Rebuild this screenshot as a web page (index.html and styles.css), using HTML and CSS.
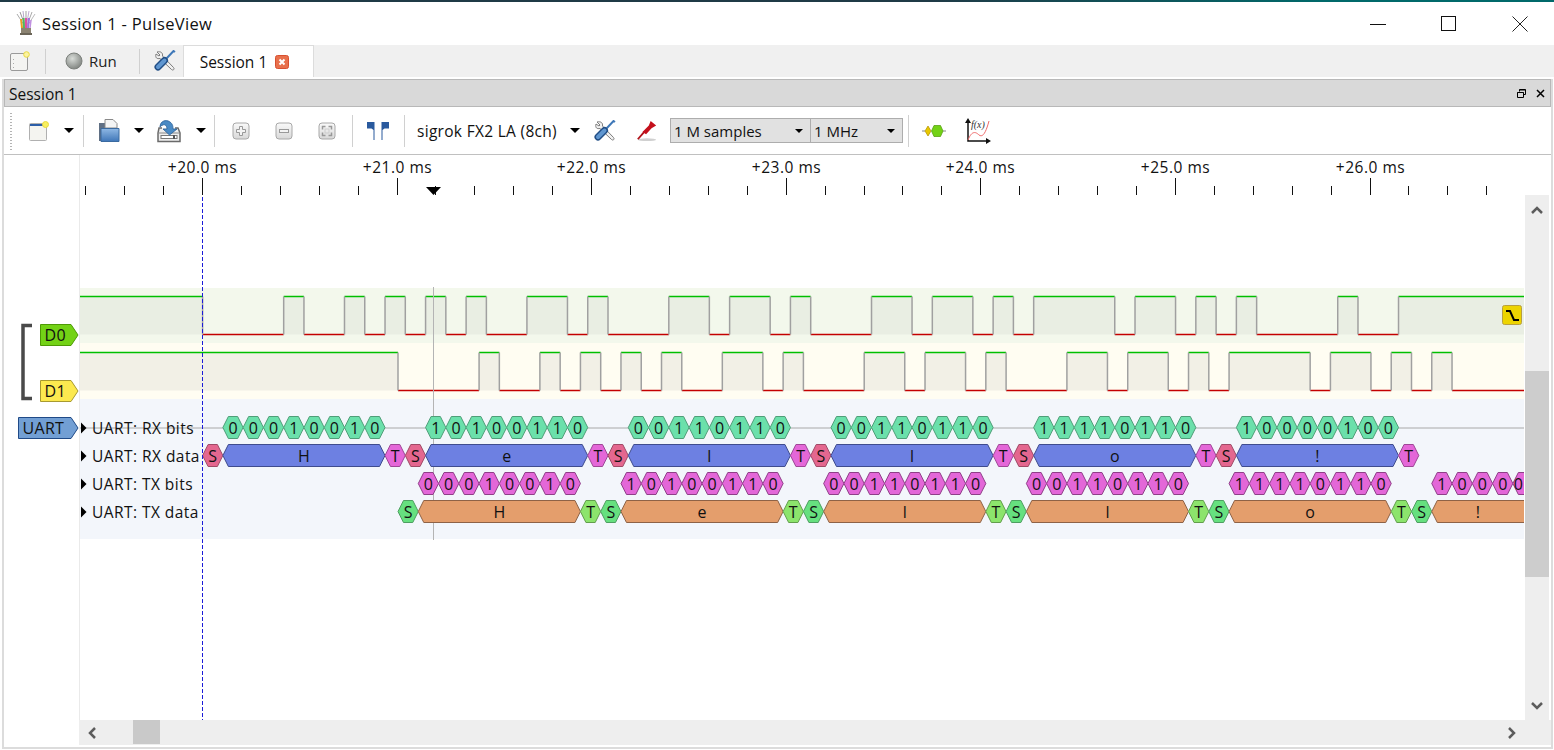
FILE: index.html
```html
<!DOCTYPE html>
<html lang="en">
<head>
<meta charset="utf-8">
<title>Session 1 - PulseView</title>
<link rel="stylesheet" href="styles.css">
</head>
<body>
<svg class="defs" width="0" height="0" aria-hidden="true">
  <defs>
    <linearGradient id="zoomfill" x1="0" y1="0" x2="0" y2="1"><stop offset="0" stop-color="#fafafa"/><stop offset="1" stop-color="#d8d8d8"/></linearGradient>
    <linearGradient id="folderfill" x1="0" y1="0" x2="0" y2="1"><stop offset="0" stop-color="#8fb8e4"/><stop offset="1" stop-color="#3f76b8"/></linearGradient>
    <radialGradient id="runfill" cx=".4" cy=".35" r=".7"><stop offset="0" stop-color="#d8dcd8"/><stop offset="1" stop-color="#7d817d"/></radialGradient>
    <symbol id="tools" viewBox="0 0 22 22">
      <path d="M3 2 L6 5 L5 6 L2 4 C1 8 3 9 6 8.500 L17.500 19.500 C19 21 21 19 19.500 17.500 L8.500 6 C9 3 7 1 3 2Z" fill="#f0f0f0" stroke="#7c7c7c" stroke-width="1"/>
      <path d="M21 2 L19.500 1 L12 9" fill="none" stroke="#3f78b8" stroke-width="2"/>
      <path d="M10.500 10.500 L4 17" stroke="#234f86" stroke-width="7" stroke-linecap="round"/>
      <path d="M10.500 10.500 L4 17" stroke="#5f96d0" stroke-width="4" stroke-linecap="round"/>
    </symbol>
    <symbol id="zoombox" viewBox="0 0 18 18">
      <rect x="1" y="1" width="16" height="16" rx="3" fill="url(#zoomfill)" stroke="#a8a8a8"/>
    </symbol>
  </defs>
</svg>

<div class="window">
  <header class="titlebar">
    <svg class="logo" width="24" height="26" viewBox="0 0 24 26">
      <path d="M12 17 L3 3" stroke="#aaa"/><path d="M12 17 L6 1" stroke="#999"/>
      <path d="M11 17 L9 0" stroke="#b8a8c8"/><path d="M12 17 L12 0" stroke="#a0a0a0"/>
      <path d="M12 17 L15 0" stroke="#c0a8d0"/><path d="M12 17 L18 1" stroke="#aaa"/><path d="M12 17 L21 3" stroke="#bbb"/>
      <path d="M8 17 L7 8" stroke="#e8a020" stroke-width="2"/><path d="M10 17 L9.500 7" stroke="#50b860" stroke-width="2"/>
      <path d="M12 17 L12 7" stroke="#e050a0" stroke-width="2"/><path d="M14 17 L15 7" stroke="#a070e0" stroke-width="2"/><path d="M16 17 L17 9" stroke="#c090e0" stroke-width="1.500"/>
      <rect x="7" y="17" width="10" height="7" fill="#8b8372"/><rect x="6" y="22" width="12" height="2" fill="#6b6558"/>
    </svg>
    <span class="title-text">Session 1 - PulseView</span>
    <div class="winctl">
      <svg class="wc" width="16" height="16" viewBox="0 0 16 16"><path d="M0 8.500H16" stroke="#111"/></svg>
      <svg class="wc" width="16" height="16" viewBox="0 0 16 16"><rect x=".5" y=".5" width="14" height="14" fill="none" stroke="#111"/></svg>
      <svg class="wc" width="16" height="16" viewBox="0 0 16 16"><path d="M.5 .5L15.500 15.500M15.500 .5L.5 15.500" stroke="#222"/></svg>
    </div>
  </header>

  <nav class="tabbar">
    <svg class="tab-new" width="20" height="20" viewBox="0 0 20 20">
      <rect x=".5" y="2.500" width="17" height="17" rx="1.500" fill="#f4f4f2" stroke="#9a9a9a"/>
      <path d="M3.500 8v1M3.500 12v1M3.500 16v1" stroke="#aaa"/>
      <circle cx="16.500" cy="3.500" r="2.800" fill="#fbf3a0" stroke="#e8d840"/>
    </svg>
    <span class="vsep tab-sep"></span>
    <svg class="run-led" width="18" height="18" viewBox="0 0 18 18"><circle cx="9" cy="9" r="8" fill="url(#runfill)" stroke="#7d817d"/></svg>
    <span class="run-text">Run</span>
    <span class="vsep tab-sep2"></span>
    <svg class="tab-tools" width="22" height="22"><use href="#tools"/></svg>
    <div class="tab">
      <span>Session 1</span>
      <svg class="tab-close" width="14" height="14" viewBox="0 0 14 14">
        <rect x=".5" y=".5" width="13" height="13" rx="2" fill="#e8704c" stroke="#d85030"/>
        <path d="M4.500 4.500L9.500 9.500M9.500 4.500L4.500 9.500" stroke="#fff" stroke-width="2"/>
      </svg>
    </div>
  </nav>

  <main class="dock">
    <div class="dock-title">
      <span>Session 1</span>
      <div class="dock-ctl">
        <svg width="9" height="9" viewBox="0 0 9 9"><path d="M2.500 2.500V.5H8.500V5.500H6.500M.5 3.500H6.500V8.500H.5Z" fill="none" stroke="#000"/><path d="M.5 3.500H6.500M2.500 1H8.500" stroke="#000"/></svg>
        <svg width="9" height="9" viewBox="0 0 9 9"><path d="M1 1L8 8M8 1L1 8" stroke="#000" stroke-width="1.500"/></svg>
      </div>
    </div>

    <div class="toolbar">
      <span class="handle"></span>
      <span class="tb tb-first">
        <svg width="20" height="20" viewBox="0 0 20 20"><rect x=".5" y="2.500" width="17" height="17" rx="1" fill="#f4f4f0" stroke="#b0b0b0"/><path d="M1 4H16" stroke="#2c5ea8" stroke-width="2"/><circle cx="16.500" cy="3.500" r="3" fill="#f8f060" stroke="#e8d840"/></svg>
      </span>
      <span class="drop"></span>
      <span class="vsep sep-a"></span>
      <span class="tb">
        <svg width="22" height="24" viewBox="0 0 22 24"><rect x="1" y="4" width="7" height="18" fill="#5f6f84"/><path d="M7 .5H15L19 4.500V9H7Z" fill="#f4f4f4" stroke="#8a8a8a"/><path d="M3 9.500H21V22.500H3Z" fill="url(#folderfill)" stroke="#3a6aa0"/></svg>
      </span>
      <span class="drop"></span>
      <span class="tb tb-save">
        <svg width="24" height="24" viewBox="0 0 24 24"><path d="M5 9H2L1 14V22.500H23V14L21 9H18" fill="#eee" stroke="#6a6a6a" stroke-width="1.500"/><path d="M1 14H23" stroke="#888"/><rect x="4" y="16.500" width="16" height="3" fill="#fff" stroke="#777"/><rect x="16" y="16" width="2" height="4" fill="#555"/><path d="M3 8C3 2 9 0 13 3C16 5 16 8 16 10H20L12.500 16L6 10H10C10 7 8 5 6 6C4.500 6.500 3.500 7 3 8Z" fill="#4a8ac4" stroke="#2a6098" stroke-width=".8"/></svg>
      </span>
      <span class="drop drop-save"></span>
      <span class="vsep sep-b"></span>
      <span class="tb tb-zoom tb-zoom1">
        <svg width="18" height="18" viewBox="0 0 18 18"><use href="#zoombox" width="18" height="18"/><path d="M7.500 4.500H10.500V7.500H13.500V10.500H10.500V13.500H7.500V10.500H4.500V7.500H7.500Z" fill="#f4f4f4" stroke="#999"/></svg>
      </span>
      <span class="tb tb-zoom">
        <svg width="18" height="18" viewBox="0 0 18 18"><use href="#zoombox" width="18" height="18"/><rect x="4.500" y="7.500" width="9" height="3" fill="#f4f4f4" stroke="#999"/></svg>
      </span>
      <span class="tb tb-zoom">
        <svg width="18" height="18" viewBox="0 0 18 18"><use href="#zoombox" width="18" height="18"/><path d="M4.500 7.500V4.500H7.500M10.500 4.500H13.500V7.500M13.500 10.500V13.500H10.500M7.500 13.500H4.500V10.500" fill="none" stroke="#999" stroke-width="1.500"/><rect x="7" y="7" width="4" height="4" fill="none" stroke="#ccc"/></svg>
      </span>
      <span class="vsep sep-c"></span>
      <span class="tb tb-cursors">
        <svg width="24" height="20" viewBox="0 0 24 20"><path d="M1 1H8.500V19H7.500V9L5.500 7.500H1Z" fill="#2a5a9e"/><path d="M23 1H15.500V19H16.500V9L18.500 7.500H23Z" fill="#2a5a9e"/></svg>
      </span>
      <span class="vsep sep-d"></span>
      <span class="device"><span class="device-name">sigrok FX2 LA (8ch)</span><span class="drop drop-device"></span></span>
      <span class="tb tb-dev"><svg width="22" height="22"><use href="#tools"/></svg></span>
      <span class="tb tb-dev">
        <svg width="22" height="24" viewBox="0 0 24 24"><ellipse cx="12" cy="21.500" rx="10" ry="1.500" fill="#d0d0d0"/><path d="M2 21L9 13" stroke="#b01018" stroke-width="2"/><path d="M7 13L14 6L16 1L22 6L17 9L11 15.500Z" fill="#c4101c"/></svg>
      </span>
      <span class="combo combo-samples"><span>1 M samples</span><span class="mini"></span></span>
      <span class="combo combo-rate"><span>1 MHz</span><span class="mini"></span></span>
      <span class="vsep sep-e"></span>
      <span class="tb tb-dev">
        <svg width="24" height="12" viewBox="0 0 24 12"><path d="M0 6H3M21 6H24" stroke="#888"/><path d="M3 6L6 1L9 6L6 11Z" fill="#e8c800" stroke="#b09000" stroke-width=".7"/><path d="M9.500 6L12 .5H18.500L21 6L18.500 11.500H12Z" fill="#73d216" stroke="#4e9a06" stroke-width=".7"/></svg>
      </span>
      <span class="tb tb-dev tb-math">
        <svg width="26" height="26" viewBox="0 0 26 26"><path d="M3 3V23H24" fill="none" stroke="#111" stroke-width="1.500"/><path d="M3 0L0 5H6ZM26 23L21 20V26Z" fill="#111"/><path d="M3 22C7 12 11 14 14 17C18 20 21 14 24 3" fill="none" stroke="#f06a6a"/><text x="6" y="10" class="fx">f(x)</text></svg>
      </span>
    </div>

    <div class="viewport">
      <div class="view-row">
        <svg id="trace" class="trace" width="1521" height="565" viewBox="4 155 1521 565" role="img" aria-label="Logic analyser traces"></svg>
        <div class="vscroll">
          <svg class="chev" width="12" height="8" viewBox="0 0 12 8"><path d="M1 7L6 2L11 7" fill="none" stroke="#5c5c5c" stroke-width="2.500"/></svg>
          <div class="vthumb"></div>
          <svg class="chev" width="12" height="8" viewBox="0 0 12 8"><path d="M1 1L6 6L11 1" fill="none" stroke="#5c5c5c" stroke-width="2.500"/></svg>
        </div>
      </div>
      <div class="hscroll">
        <svg class="chev-h" width="8" height="12" viewBox="0 0 8 12"><path d="M7 1L2 6L7 11" fill="none" stroke="#5c5c5c" stroke-width="2.500"/></svg>
        <div class="hthumb"></div>
        <svg class="chev-h chev-r" width="8" height="12" viewBox="0 0 8 12"><path d="M1 1L6 6L1 11" fill="none" stroke="#5c5c5c" stroke-width="2.500"/></svg>
      </div>
    </div>
  </main>
</div>
<script src="app.js"></script>
</body>
</html>
```
FILE: styles.css
```css
* { box-sizing: border-box; }
html, body { margin: 0; height: 100%; overflow: hidden; background: #fff; }
body { font-family: "Open Sans", "Noto Sans", sans-serif; font-size: 15.5px; color: #111; }
.defs { position: absolute; }
.window { width: 1554px; height: 750px; display: flex; flex-direction: column; overflow: hidden;
  border-top: 2px solid; border-image: linear-gradient(to right, #1f3a46 0, #1f3a46 60%, #00696a 85%, #00696a 100%) 1; }

.titlebar { height: 43px; flex: none; display: flex; align-items: center; padding-left: 14px; }
.logo { flex: none; }
.title-text { margin-left: 4px; font-size: 16.5px; letter-spacing: .33px; }
.winctl { margin-left: auto; display: flex; padding-right: 26px; gap: 55px; }
.wc { display: block; }

.tabbar { height: 32px; flex: none; background: #f0f0f0; display: flex; align-items: center; position: relative; }
.tab-new { margin-left: 10px; }
.vsep { display: block; width: 1px; background: #d0d0d0; flex: none; }
.tab-sep { height: 25px; margin-left: 15px; }
.run-led { margin-left: 19px; }
.run-text { margin-left: 6px; color: #222; font-size: 15px; }
.tab-sep2 { height: 25px; margin-left: 22px; }
.tab-tools { margin-left: 14px; }
.tab { margin-left: 7px; align-self: stretch; width: 131px; background: #fff; border: 1px solid #dcdcdc; border-bottom: 0; display: flex; align-items: center; padding-left: 16px; gap: 8px; }

.dock { flex: 1; margin: 2px 1px 1px 2px; border: 1px solid #dcdcdc; border-width: 0 2px 2px 2px; display: flex; flex-direction: column; min-height: 0; }
.dock-title { height: 28px; flex: none; background: #d9d9d9; border: 1px solid #b8b8b8; display: flex; align-items: center; justify-content: space-between; padding: 1px 5px 0 4px; }
.dock-ctl { display: flex; gap: 10px; align-items: center; }
.dock-ctl svg { display: block; }

.toolbar { height: 48px; flex: none; display: flex; align-items: center; border-bottom: 1px solid #c0c0c0; }
.handle { width: 14px; height: 38px; flex: none; background-image: radial-gradient(circle, #b4b4b4 .8px, transparent 1px); background-size: 14px 3px; background-position: 0 0; }
.tb { width: 42px; height: 30px; flex: none; display: flex; align-items: center; justify-content: center; }
.tb svg { display: block; }
.drop { width: 18px; height: 5px; flex: none; position: relative; }
.drop::before { content: ""; display: block; width: 0; margin: 0 auto; border: 5.5px solid transparent; border-top: 5.5px solid #000; border-bottom: 0; }
.drop-save { margin-left: 2px; }
.sep-a { height: 32px; margin: 0 4px 0 5px; }
.sep-b { height: 32px; margin: 0 4px 0 4px; }
.tb-zoom { width: 43px; }
.sep-c { height: 32px; margin: 0 4px; }
.sep-d { height: 32px; margin: 0 0 0 5px; }
.tb-cursors { width: 42px; }
.device { width: 164px; margin: 0 3px 0 12px; flex: none; display: flex; align-items: center; justify-content: space-between; white-space: nowrap; letter-spacing: .3px; }
.device-name { padding-top: 1px; }
.drop-device { width: 12px; }
.tb-dev { width: 42px; }
.combo { height: 25px; background: #e1e1e1; border: 1px solid #adadad; flex: none; display: flex; align-items: center; justify-content: space-between; padding: 0 4px 0 3px; white-space: nowrap; font-size: 15px; }
.combo-samples { width: 141px; margin-left: 2px; }
.combo-rate { width: 93px; margin-left: -1px; }
.mini { width: 0; border: 4px solid transparent; border-top: 4px solid #000; border-bottom: 0; margin-right: 3px; }
.sep-e { height: 32px; margin: 0 4px 0 5px; }
.tb-math { margin-left: 2px; }
.fx { font-family: "Liberation Serif", serif; font-style: italic; font-size: 10px; fill: #333; }

.viewport { flex: 1; min-height: 0; display: flex; flex-direction: column; }
.view-row { height: 565px; flex: none; display: flex; }
.trace { display: block; flex: none; }
.vscroll { width: 24px; flex: none; margin-top: 40px; background: #eee; display: flex; flex-direction: column; align-items: center; position: relative; }
.vscroll .chev:first-child { margin-top: 11px; }
.vscroll .chev:last-child { margin-top: auto; margin-bottom: 10px; }
.vthumb { position: absolute; left: 0; right: 0; top: 176px; height: 206px; background: #cdcdcd; }
.hscroll { height: 25px; flex: none; margin-left: 75px; background: #eee; position: relative; display: flex; align-items: center; padding: 0 35px 0 9px; }
.hthumb { position: absolute; left: 54px; top: 0; bottom: 1px; width: 27px; background: #c9c9c9; }
.chev-r { margin-left: auto; }

/* trace canvas */
.gutter { stroke: #eaeaea; }
.rule-major, .rule-minor { stroke: #111; }
.rule-text { font-size: 15.5px; letter-spacing: .5px; text-anchor: middle; fill: #111; }
.bg-d0 { fill: #f3f8ec; }
.bg-d1 { fill: #fffdf2; }
.bg-uart { fill: #f3f6fb; }
.sh-d0 { fill: #e9eee3; }
.sh-d1 { fill: #f2f0e6; }
.hi { stroke: #00bf00; stroke-width: 1.500; fill: none; }
.lo { stroke: #c40000; stroke-width: 1.500; fill: none; }
.edge { stroke: #a0a0a0; stroke-width: 1.500; fill: none; }
.cursor-line { stroke: #b4b4b4; }
.trigger-line { stroke: #1c1cd8; stroke-dasharray: 4 2; }
.zero { stroke: #a8a8a8; }
.label { font-size: 15.5px; letter-spacing: .45px; fill: #111; }
.tag-text { font-size: 16px; letter-spacing: .3px; fill: #111; }
.ann { font-size: 16px; text-anchor: middle; fill: #111; }
.tag-d0 { fill: #73d216; stroke: #4e9a06; }
.tag-d1 { fill: #fce94f; stroke: #a89a30; }
.tag-uart { fill: #729fd4; stroke: #204a87; }
.bracket { fill: none; stroke: #4a4a4a; stroke-width: 3.500; }
.arrow { fill: #000; }
.trig-box { fill: #edd400; stroke: #b8a040; }
.trig-edge { fill: none; stroke: #000; stroke-width: 2; }
.h-rxbit { fill: #6be0ab; stroke: #4f9e78; }
.h-rxdata { fill: #6d80e2; stroke: #3f4c8e; }
.h-rxs { fill: #e4678f; stroke: #9f4a66; }
.h-rxt { fill: #e467d8; stroke: #9e4796; }
.h-txbit { fill: #e367d8; stroke: #8f3f88; }
.h-txdata { fill: #e49e6c; stroke: #8e6246; }
.h-txs { fill: #66e07f; stroke: #4e9e61; }
.h-txt { fill: #8ce46c; stroke: #629e4c; }
```
FILE: app.js
```js
// Draws the session view from the decoded UART data, as PulseView paints its own canvas.
(function () {
  var NS = 'http://www.w3.org/2000/svg';
  var svg = document.getElementById('trace');
  var LEFT = 80, RIGHT = 1524;
  var BIT = 20.27, FRAME = 202.7;
  var BYTES = [
    ['H', '00010010'], ['e', '10100110'], ['l', '00110110'],
    ['l', '00110110'], ['o', '11110110'], ['!', '10000100']
  ];

  function el(name, attrs, text, parent) {
    var n = document.createElementNS(NS, name);
    for (var k in attrs) n.setAttribute(k, attrs[k]);
    if (text != null) n.textContent = text;
    (parent || svg).appendChild(n);
    return n;
  }
  function rect(x, y, w, h, cls, p) { return el('rect', { x: x, y: y, width: w, height: h, 'class': cls }, null, p); }
  function line(x1, y1, x2, y2, cls, p) { return el('line', { x1: x1, y1: y1, x2: x2, y2: y2, 'class': cls }, null, p); }

  var defs = el('defs', {});
  var clip = el('clipPath', { id: 'viewclip' }, null, defs);
  rect(LEFT, 155, RIGHT - LEFT, 565, '', clip);

  // Ruler
  line(79.5, 155, 79.5, 720, 'gutter');
  var X0 = 202.4, MS = 194.6, STEP = MS / 5;
  for (var t = -3; t <= 34; t++) {
    var x = Math.floor(X0 + t * STEP) + 0.5;
    if (x < 80 || x > 1526) continue;
    if (t % 5 === 0) {
      line(x, 178, x, 195, 'rule-major');
      el('text', { x: x, y: 173, 'class': 'rule-text' }, '+' + (20 + t / 5) + '.0 ms');
    } else {
      line(x, 186, x, 195, 'rule-minor');
    }
  }
  el('path', { d: 'M426 187H441L433.500 195Z', 'class': 'arrow' });

  // Row backgrounds
  rect(LEFT, 288, RIGHT - LEFT, 55, 'bg-d0');
  rect(LEFT, 343, RIGHT - LEFT, 56, 'bg-d1');
  rect(LEFT, 399, RIGHT - LEFT, 140, 'bg-uart');

  // Logic waveform from the frame data
  function levels(startX) {
    var edges = [];
    BYTES.forEach(function (b, i) {
      var s = startX + i * FRAME;
      var bits = '0' + b[1] + '1';
      for (var j = 0; j < 10; j++) edges.push([s + j * BIT, bits.charAt(j)]);
    });
    return edges;
  }
  function wave(startX, hi, lo, shadeCls) {
    var g = el('g', { 'clip-path': 'url(#viewclip)' });
    var cur = '1', from = LEFT, parts = [];
    levels(startX).forEach(function (e) {
      if (e[1] !== cur) { parts.push([from, e[0], cur]); from = e[0]; cur = e[1]; }
    });
    parts.push([from, RIGHT, cur]);
    parts.forEach(function (p, i) {
      if (p[0] >= RIGHT) return;
      var end = Math.min(p[1], RIGHT);
      if (p[2] === '1') {
        rect(p[0], hi, end - p[0], lo - hi, shadeCls, g);
        line(p[0], hi, end, hi, 'hi', g);
      } else {
        line(p[0], lo, end, lo, 'lo', g);
      }
      if (i > 0) line(p[0], hi, p[0], lo, 'edge', g);
    });
  }
  wave(202.6, 296.5, 334.5, 'sh-d0');
  wave(398, 352.5, 390.5, 'sh-d1');

  // Cursor line
  line(433.5, 287, 433.5, 540, 'cursor-line');

  // Annotations: anything that starts past the right edge of the view is not drawn.
  var layer = el('g', { 'clip-path': 'url(#viewclip)' });
  function hex(x, w, c, cls, label) {
    if (x >= RIGHT) return;
    var h = 11, n = 5.5, e = x + w;
    var pts = [[x, c], [x + n, c - h], [e - n, c - h], [e, c], [e - n, c + h], [x + n, c + h]];
    el('polygon', { points: pts.map(function (p) { return p.join(','); }).join(' '), 'class': cls }, null, layer);
    var visR = Math.min(e, RIGHT);
    if (visR - x > 8) el('text', { x: (x + visR) / 2, y: c + 6, 'class': 'ann' }, label, layer);
  }
  line(LEFT, 428, RIGHT, 428, 'zero', layer);
  function decode(startX, rows, cls) {
    BYTES.forEach(function (b, i) {
      var s = startX + i * FRAME;
      hex(s, BIT, rows.data, cls.s, 'S');
      hex(s + BIT, 8 * BIT, rows.data, cls.data, b[0]);
      hex(s + 9 * BIT, BIT, rows.data, cls.t, 'T');
      for (var j = 0; j < 8; j++) hex(s + (j + 1) * BIT, BIT, rows.bits, cls.bit, b[1].charAt(j));
    });
  }
  decode(202.6, { bits: 427.5, data: 455.5 }, { s: 'h-rxs', data: 'h-rxdata', t: 'h-rxt', bit: 'h-rxbit' });
  decode(398, { bits: 483.5, data: 511.5 }, { s: 'h-txs', data: 'h-txdata', t: 'h-txt', bit: 'h-txbit' });

  // Trigger line and marker
  line(202.5, 197, 202.5, 720, 'trigger-line');
  rect(1502.5, 305.5, 19, 19, 'trig-box').setAttribute('rx', 2);
  el('path', { d: 'M1506 311H1510L1514 320H1519', 'class': 'trig-edge' });

  // Trace headers
  function tag(x, y, w, cls, text) {
    var h = 21, tip = 7;
    el('path', { d: 'M' + x + ' ' + y + 'H' + (x + w - tip) + 'L' + (x + w) + ' ' + (y + h / 2) + 'L' + (x + w - tip) + ' ' + (y + h) + 'H' + x + 'Z', 'class': cls });
    el('text', { x: x + 4, y: y + 16, 'class': 'tag-text' }, text);
  }
  el('path', { d: 'M32 325.500H23V398.500H32', 'class': 'bracket' });
  tag(40.5, 324.5, 37.5, 'tag-d0', 'D0');
  tag(40.5, 380.5, 37.5, 'tag-d1', 'D1');
  tag(18.5, 417.5, 59.5, 'tag-uart', 'UART');

  [['UART: RX bits', 428], ['UART: RX data', 456], ['UART: TX bits', 484], ['UART: TX data', 512]].forEach(function (r) {
    el('path', { d: 'M81 ' + (r[1] - 5.500) + 'L86.500 ' + r[1] + 'L81 ' + (r[1] + 5.500) + 'Z', 'class': 'arrow' });
    el('text', { x: 92, y: r[1] + 5.5, 'class': 'label' }, r[0]);
  });
})();
```
